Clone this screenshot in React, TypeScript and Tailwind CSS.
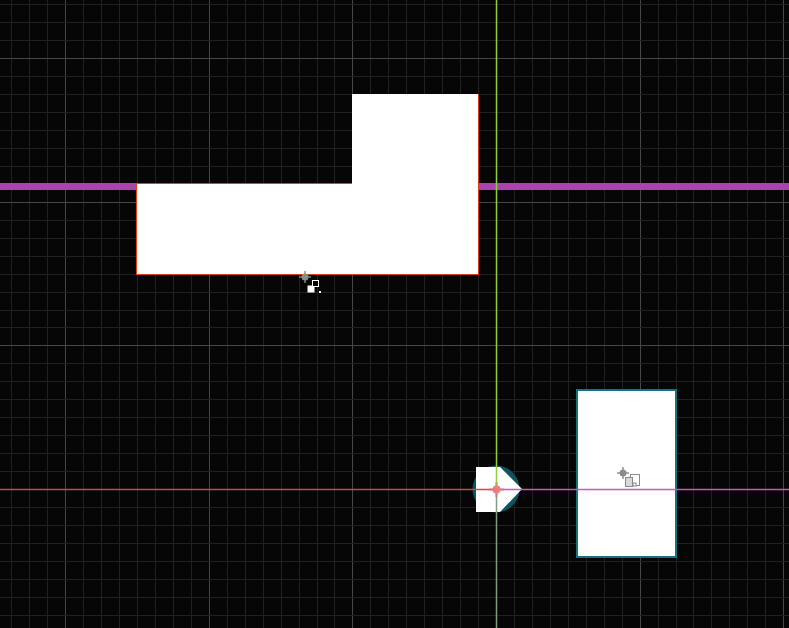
import {FC} from 'react';

const W = 789;
const H = 628;
const OX = 496;
const OY = 489;
const STEP = 17.95;

const lines = (origin: number, max: number) => {
  const out: {p: number; major: boolean}[] = [];
  for (let k = -40; k <= 40; k++) {
    const p = Math.round(origin + k * STEP);
    if (p < 0 || p > max) continue;
    out.push({p, major: k % 8 === 0});
  }
  return out;
};

const Grid: FC = () => (
  <svg width={W} height={H} className="absolute inset-0">
    {lines(OX, W).map(({p, major}) => (
      <line
        key={'v' + p}
        x1={p + 0.5}
        x2={p + 0.5}
        y1={0}
        y2={H}
        stroke={major ? '#474747' : '#212121'}
        strokeWidth={1}
      />
    ))}
    {lines(OY, H).map(({p, major}) => (
      <line
        key={'h' + p}
        y1={p + 0.5}
        y2={p + 0.5}
        x1={0}
        x2={W}
        stroke={major ? '#474747' : '#212121'}
        strokeWidth={1}
      />
    ))}
  </svg>
);

// little pivot / transform gizmo next to each object
const Pivot: FC<{x: number; y: number; tone: 'light' | 'dark'}> = ({x, y, tone}) => {
  const dark = tone === 'dark';
  return (
    <svg width={26} height={24} viewBox="0 0 26 24" className="absolute" style={{left: x, top: y}}>
      <g fill="#8c8c8c">
        <circle cx={6} cy={6} r={3.5} />
        <rect x={5} y={0} width={2} height={12} opacity={0.7} />
        <rect x={0} y={5} width={12} height={2} opacity={0.7} />
      </g>
      {dark ? (
        <>
          <rect x={8.5} y={14.5} width={7} height={7} fill="#ffffff" />
          <rect x={13.5} y={9.5} width={6} height={6} fill="#000000" stroke="#ffffff" strokeWidth={1} />
          <rect x={20} y={20} width={2} height={2} fill="#ffffff" />
        </>
      ) : (
        <>
          <rect x={13.5} y={7.5} width={9} height={11} fill="#ffffff" stroke="#8a8a8a" strokeWidth={1} />
          <rect x={8.5} y={10.5} width={7} height={9} fill="#d8d8d8" stroke="#8a8a8a" strokeWidth={1} />
          <rect x={16} y={16} width={3} height={3} fill="#ffffff" stroke="#8a8a8a" strokeWidth={1} />
        </>
      )}
    </svg>
  );
};

const Axes: FC = () => (
  <svg width={W} height={H} className="absolute inset-0">
    <line x1={0} x2={OX} y1={OY + 0.5} y2={OY + 0.5} stroke="#c8455a" strokeWidth={1.5} />
    <line x1={OX} x2={W} y1={OY + 0.5} y2={OY + 0.5} stroke="#c05cc0" strokeWidth={1.5} />
    <line x1={OX + 0.5} x2={OX + 0.5} y1={0} y2={OY} stroke="#8fd03a" strokeWidth={1.5} />
    <line x1={OX + 0.5} x2={OX + 0.5} y1={OY} y2={H} stroke="#7f9e80" strokeWidth={1.5} />
    <g fill="#f07c7c">
      <rect x={OX - 7} y={OY - 1} width={15} height={3} opacity={0.55} />
      <rect x={OX - 1} y={OY - 7} width={3} height={15} opacity={0.55} />
      <circle cx={OX + 0.5} cy={OY + 0.5} r={4} />
    </g>
  </svg>
);

const Arrow: FC = () => (
  <svg width={W} height={H} className="absolute inset-0">
    <circle cx={OX} cy={OY} r={23.5} fill="#0d5460" />
    <polygon points="476,467 500,467 522,489 500,512 476,512" fill="#ffffff" />
  </svg>
);

const App: FC = () => {
  return (
    <div className="relative w-[789px] h-[628px] overflow-hidden bg-[#060606] font-['Liberation_Sans',sans-serif]">
      <Grid />

      {/* horizontal guide band */}
      <div className="absolute left-0 top-[183px] w-full h-[7px] bg-[#a546a8]" />

      {/* L shaped block */}
      <div className="absolute left-[352px] top-[94px] w-[127px] h-[91px] bg-white border-r border-[#d8401c]" />
      <div className="absolute left-[136px] top-[184px] w-[343px] h-[91px] bg-white border-l border-r border-b border-[#d8401c]" />

      {/* tall block */}
      <div className="absolute left-[576px] top-[389px] w-[101px] h-[169px] bg-white border-2 border-[#17717f]" />

      <Arrow />
      <Axes />

      <Pivot x={299} y={271} tone="dark" />
      <Pivot x={617} y={467} tone="light" />
    </div>
  );
};

export default App;
